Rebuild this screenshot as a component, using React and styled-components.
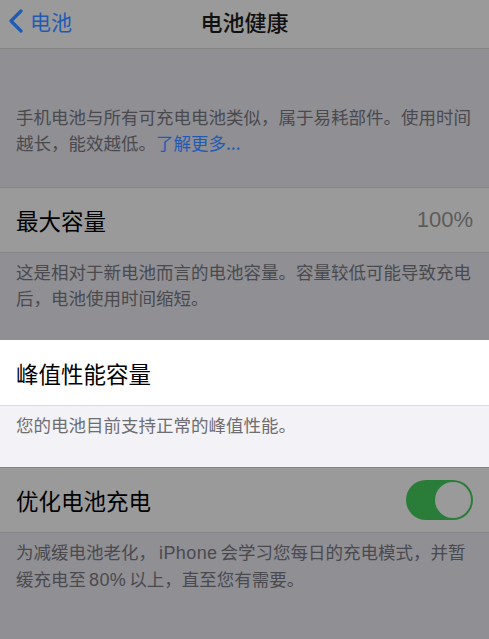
import React from 'react'
import styled, { createGlobalStyle } from 'styled-components'

const GlobalStyle = createGlobalStyle`
  html, body {
    margin: 0;
    padding: 0;
    background: #8f8f94;
  }
  body {
    font-family: "Noto Sans CJK SC", "Liberation Sans", sans-serif;
    -webkit-font-smoothing: antialiased;
  }
`

const Screen = styled.div`
  width: 489px;
  min-height: 639px;
  background: #8f8f94;
  overflow: hidden;
`

const NavBar = styled.div`
  height: 48px;
  display: grid;
  grid-template-columns: 1fr auto 1fr;
  align-items: center;
  background: #9a9a9a;
  border-bottom: 1px solid #858585;
`

const Back = styled.div`
  display: flex;
  align-items: center;
  gap: 6px;
  padding-left: 8px;
  margin-top: -7px;
  color: #1f5bb5;
  font-size: 21px;
`

const Title = styled.div`
  font-size: 22px;
  font-weight: 500;
  color: #111;
  margin-top: -7px;
`

const Header = styled.div`
  padding: 55px 16px 32px;
  font-size: 17.5px;
  line-height: 25.5px;
  color: #4a4a4e;
`

const Link = styled.span`
  color: #1f5bb5;
`

const Cell = styled.div`
  height: 64px;
  display: flex;
  align-items: center;
  justify-content: space-between;
  padding: 0 16px;
  background: ${p => (p.lit ? '#ffffff' : '#9a9a9a')};
  border-top: 1px solid ${p => (p.lit ? 'transparent' : '#858585')};
  border-bottom: 1px solid ${p => (p.lit ? '#dcdcdf' : '#858585')};
  box-sizing: content-box;
`

const Label = styled.span`
  font-size: 22.5px;
  color: #000;
`

const Value = styled.span`
  font-family: "Liberation Sans", sans-serif;
  font-size: 22px;
  color: #5c5c5c;
`

const Footer = styled.div`
  padding: 6px 16px ${p => p.bottom || 30}px;
  font-size: 17.5px;
  line-height: 25.5px;
  color: ${p => (p.lit ? '#6d6d72' : '#4a4a4e')};
  background: ${p => (p.lit ? '#f2f2f7' : 'transparent')};
`

const Latin = styled.span`
  font-family: "Liberation Sans", sans-serif;
  font-size: 18px;
  letter-spacing: 0.4px;
  margin: 0 3px;
`

const Switch = styled.div`
  width: 67px;
  height: 40px;
  border-radius: 20px;
  background: #2a7d38;
  display: flex;
  justify-content: flex-end;
  align-items: center;
  padding: 0 2px;
  box-sizing: border-box;
`

const Knob = styled.div`
  width: 36px;
  height: 36px;
  border-radius: 50%;
  background: #9a9a9a;
`

const Chevron = () => (
  <svg width="16" height="24" viewBox="0 0 16 24">
    <path d="M13 2 L3 12 L13 22" fill="none" stroke="#1f5bb5" strokeWidth="3.2" strokeLinecap="round" strokeLinejoin="round" />
  </svg>
)

export default function App() {
  return (
    <Screen>
      <GlobalStyle />
      <NavBar>
        <Back>
          <Chevron />
          <span>电池</span>
        </Back>
        <Title>电池健康</Title>
        <div />
      </NavBar>

      <Header>
        手机电池与所有可充电电池类似，属于易耗部件。使用时间越长，能效越低。<Link>了解更多...</Link>
      </Header>

      <Cell>
        <Label>最大容量</Label>
        <Value>100%</Value>
      </Cell>
      <Footer>这是相对于新电池而言的电池容量。容量较低可能导致充电后，电池使用时间缩短。</Footer>

      <Cell lit>
        <Label>峰值性能容量</Label>
      </Cell>
      <Footer lit bottom={29}>您的电池目前支持正常的峰值性能。</Footer>

      <Cell>
        <Label>优化电池充电</Label>
        <Switch>
          <Knob />
        </Switch>
      </Cell>
      <Footer>
        为减缓电池老化，<Latin>iPhone</Latin>会学习您每日的充电模式，并暂缓充电至<Latin>80%</Latin>以上，直至您有需要。
      </Footer>
    </Screen>
  )
}
